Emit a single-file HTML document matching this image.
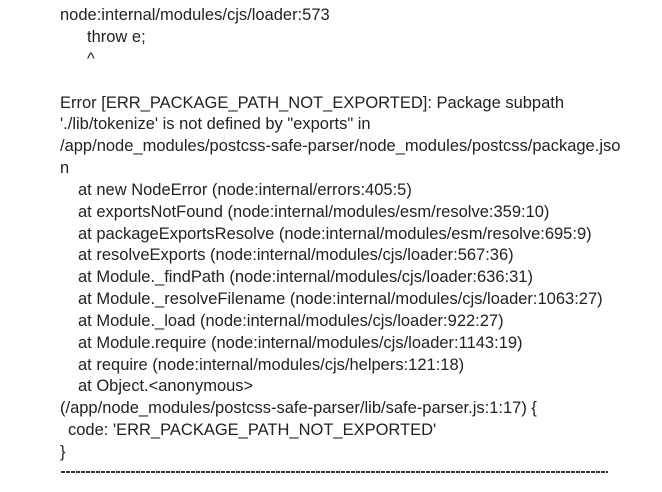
<!DOCTYPE html>
<html><head><meta charset="utf-8"><style>
html,body{margin:0;padding:0;background:#fff;width:662px;height:492px;overflow:hidden}
.l{position:absolute;font-family:"Liberation Sans",Arial,sans-serif;font-size:16.5px;color:#222;white-space:pre;line-height:20px}
</style></head><body>
<div class="l" style="left:60px;top:5px">node:internal/modules/cjs/loader:573</div>
<div class="l" style="left:87px;top:27px">throw e;</div>
<div class="l" style="left:87px;top:49px">^</div>
<div class="l" style="left:60px;top:93px">Error [ERR_PACKAGE_PATH_NOT_EXPORTED]: Package subpath</div>
<div class="l" style="left:60px;top:114px">'./lib/tokenize' is not defined by "exports" in</div>
<div class="l" style="left:60px;top:136px">/app/node_modules/postcss-safe-parser/node_modules/postcss/package.jso</div>
<div class="l" style="left:60px;top:158px">n</div>
<div class="l" style="left:78px;top:180px">at new NodeError (node:internal/errors:405:5)</div>
<div class="l" style="left:78px;top:202px">at exportsNotFound (node:internal/modules/esm/resolve:359:10)</div>
<div class="l" style="left:78px;top:224px">at packageExportsResolve (node:internal/modules/esm/resolve:695:9)</div>
<div class="l" style="left:78px;top:245px">at resolveExports (node:internal/modules/cjs/loader:567:36)</div>
<div class="l" style="left:78px;top:267px">at Module._findPath (node:internal/modules/cjs/loader:636:31)</div>
<div class="l" style="left:78px;top:289px">at Module._resolveFilename (node:internal/modules/cjs/loader:1063:27)</div>
<div class="l" style="left:78px;top:311px">at Module._load (node:internal/modules/cjs/loader:922:27)</div>
<div class="l" style="left:78px;top:333px">at Module.require (node:internal/modules/cjs/loader:1143:19)</div>
<div class="l" style="left:78px;top:355px">at require (node:internal/modules/cjs/helpers:121:18)</div>
<div class="l" style="left:78px;top:376px">at Object.&lt;anonymous&gt;</div>
<div class="l" style="left:60px;top:398px">(/app/node_modules/postcss-safe-parser/lib/safe-parser.js:1:17) {</div>
<div class="l" style="left:68px;top:420px">code: 'ERR_PACKAGE_PATH_NOT_EXPORTED'</div>
<div class="l" style="left:60px;top:442px">}</div>
<div style="position:absolute;left:61px;top:471px;width:547px;height:2px;background:repeating-linear-gradient(90deg,#333 0 4px,transparent 4px 5px)"></div>
</body></html>
